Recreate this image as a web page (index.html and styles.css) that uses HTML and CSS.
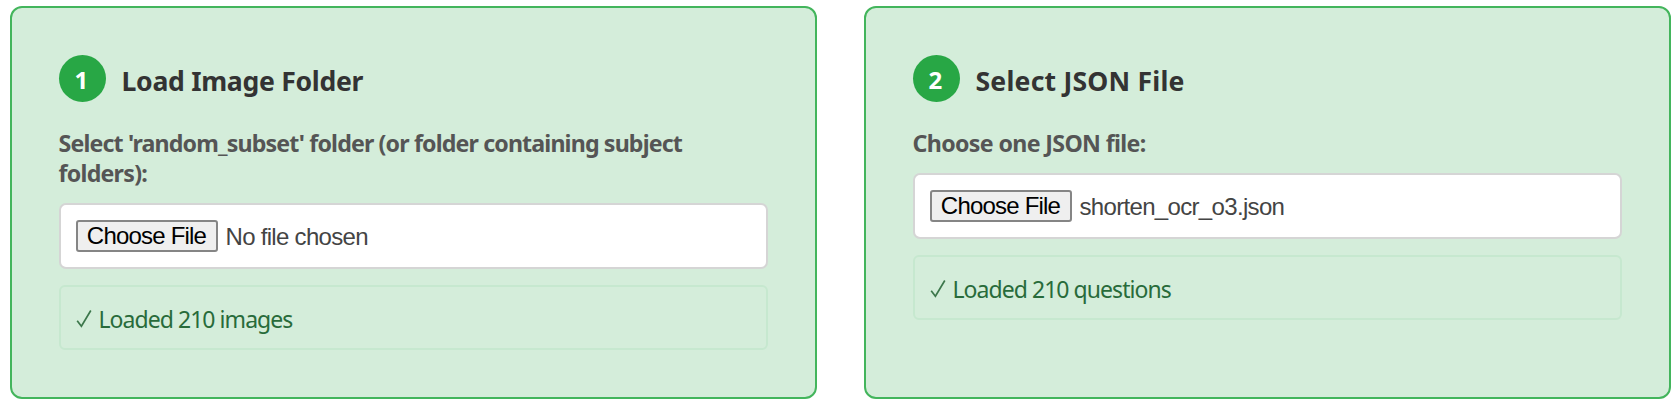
FILE: index.html
```html
<!DOCTYPE html>
<html lang="en">
<head>
<meta charset="utf-8">
<title>Load Data</title>
<link rel="stylesheet" href="styles.css">
</head>
<body>
<main class="steps">
  <section class="card">
    <header class="card-head"><span class="badge">1</span><h2 class="title title-folder">Load Image Folder</h2></header>
    <p class="label"><span class="label-long">Select 'random_subset' folder (or folder containing subject</span><br><span class="label-rest">folders):</span></p>
    <div class="file"><button class="choose" type="button">Choose File</button><span class="filename name-none">No file chosen</span></div>
    <div class="status"><svg class="check" viewBox="0 0 17 20"><path d="M1.2 11.7 L5.4 17.2 L14.8 1.5"/></svg><span class="status-text">Loaded 210 images</span></div>
  </section>
  <section class="card">
    <header class="card-head"><span class="badge">2</span><h2 class="title title-json">Select JSON File</h2></header>
    <p class="label"><span class="label-json">Choose one JSON file:</span></p>
    <div class="file"><button class="choose" type="button">Choose File</button><span class="filename name-json">shorten_ocr_o3.json</span></div>
    <div class="status"><svg class="check" viewBox="0 0 17 20"><path d="M1.2 11.7 L5.4 17.2 L14.8 1.5"/></svg><span class="status-text">Loaded 210 questions</span></div>
  </section>
</main>
</body>
</html>
```
FILE: styles.css
```css
* { box-sizing: border-box; }
body { margin: 0; background: #fff; font-family: "Segoe UI", "Noto Sans", sans-serif; }
.steps { display: grid; grid-template-columns: 807px 807px; gap: 47px; height: 403px; padding: 6px 0 4px 10px; }
.card { height: 393px; padding: 46.5px 47.5px 0 46.5px; border: 2px solid #43b55c; border-radius: 12px; background: #d4edda; }
.card-head { display: flex; align-items: center; gap: 15.5px; height: 48px; }
.badge { display: flex; align-items: center; justify-content: center; flex: none; width: 47.5px; height: 47.5px; border-radius: 50%; background: #28a745; color: #fff; font-size: 24px; font-weight: 700; line-height: 48px; padding-top: 3px; padding-right: 2px; }
.title { margin: 0; padding-top: 4px; color: #333; font-size: 26.6px; font-weight: 700; line-height: 36px; white-space: nowrap; }
.title-folder { letter-spacing: -0.3px; }
.title-json { letter-spacing: 0.2px; }
.label { margin: 25px 0 15px; color: #555; font-size: 23.2px; font-weight: 700; line-height: 30px; white-space: nowrap; }
.label-long { letter-spacing: -0.86px; }
.label-rest { letter-spacing: -0.75px; }
.label-json { letter-spacing: -0.65px; }
.file { display: flex; align-items: flex-start; gap: 8px; height: 66px; padding: 15px; border: 2px solid #d5d5d5; border-radius: 7px; background: #fff; font-family: "Liberation Sans", Arial, sans-serif; }
.choose { width: 142px; height: 32px; padding: 0; border: 2px solid #858585; border-radius: 3px; background: #efefef; color: #000; font: 24px/26px "Liberation Sans", Arial, sans-serif; letter-spacing: -0.8px; white-space: nowrap; }
.filename { color: #444; font-size: 24px; line-height: 34px; white-space: nowrap; }
.name-none { letter-spacing: -0.7px; }
.name-json { letter-spacing: -0.67px; }
.status { display: flex; align-items: center; gap: 6px; height: 65px; margin-top: 16px; padding: 3px 15px 0; border: 2px solid #c6e8cf; border-radius: 6px; color: #286b3a; font-size: 23px; line-height: 32px; }
.check { width: 17px; height: 20px; fill: none; stroke: #3c774b; stroke-width: 1.7; }
.status-text { letter-spacing: -0.95px; white-space: nowrap; }
```
